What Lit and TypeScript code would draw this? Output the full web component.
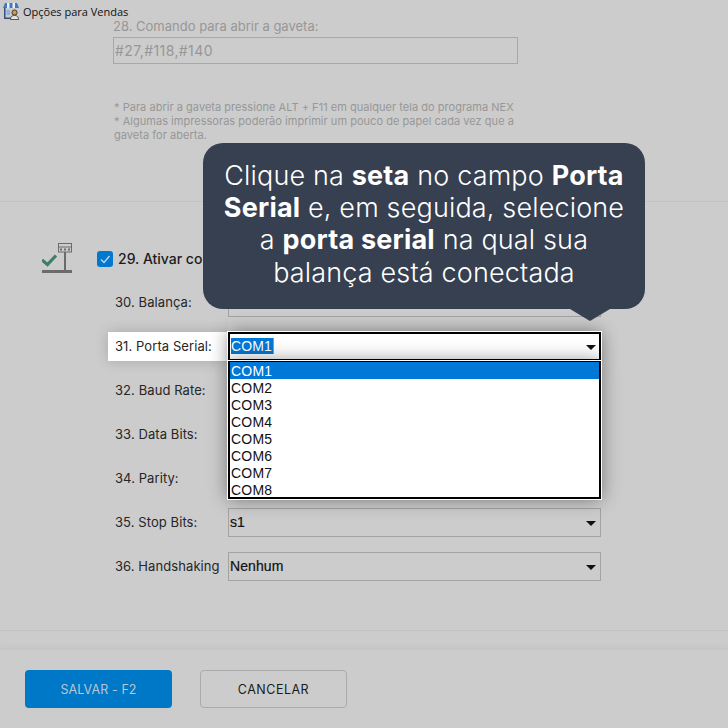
import { LitElement, html, css } from "lit";
import { customElement } from "lit/decorators.js";

const ports = ["COM1", "COM2", "COM3", "COM4", "COM5", "COM6", "COM7", "COM8"];

@customElement("app-root")
export class AppRoot extends LitElement {
  static styles = css`
    :host {
      display: block;
      width: 728px;
      height: 728px;
      overflow: hidden;
      background: #cccccc;
      font-family: Inter, "Liberation Sans", sans-serif;
      color: #1c1c1c;
    }
    .page {
      position: relative;
      width: 728px;
      height: 728px;
      display: flex;
      flex-direction: column;
      overflow: hidden;
    }
    .titlebar {
      height: 21px;
      flex: none;
      box-sizing: border-box;
      padding: 1px 0 0 2px;
      display: flex;
      align-items: center;
      gap: 3px;
      background: #cccccc;
      position: relative;
      z-index: 1;
      font-family: "Open Sans", "Noto Sans", sans-serif;
      font-size: 11px;
      color: #111;
    }
    .gaveta {
      height: 181px;
      flex: none;
      padding-left: 113px;
      box-sizing: border-box;
      border-bottom: 1px solid #c2c2c2;
      color: #979797;
    }
    .gaveta .lbl {
      font-size: 13px;
      line-height: 14px;
      margin-top: -2px;
    }
    .gaveta .field {
      width: 405px;
      height: 27px;
      margin-top: 4px;
      box-sizing: border-box;
      border: 1px solid #a8a8a8;
      padding-left: 1px;
      font-size: 14px;
      line-height: 25px;
      letter-spacing: 0.4px;
    }
    .notes {
      margin: 36px 0 0 1px;
      width: 410px;
      font-size: 11px;
      line-height: 14px;
      letter-spacing: 0.03px;
    }
    .config {
      height: 429px;
      flex: none;
      box-sizing: border-box;
      border-bottom: 1px solid #c2c2c2;
      padding: 41px 0 0 42px;
    }
    .head {
      display: flex;
      align-items: flex-start;
      height: 45px;
    }
    .head svg {
      flex: none;
    }
    .check {
      width: 16px;
      height: 16px;
      margin: 8px 5px 0 23px;
      flex: none;
    }
    .head span {
      font-size: 14px;
      font-weight: 500;
      line-height: 18px;
      margin-top: 7px;
    }
    .row {
      display: flex;
      align-items: center;
      height: 29px;
      margin: 0 0 15px 73px;
      font-size: 13px;
      letter-spacing: 0.08px;
      color: #262626;
    }
    .row .name {
      width: 113px;
      flex: none;
      box-sizing: border-box;
      padding-bottom: 2px;
      white-space: nowrap;
    }
    .select {
      position: relative;
      width: 373px;
      height: 29px;
      flex: none;
      box-sizing: border-box;
      border: 1px solid #a3a3a3;
      padding-left: 1px;
      font-family: "Liberation Sans", Arial, sans-serif;
      font-size: 14px;
      font-weight: 500;
      line-height: 27px;
      letter-spacing: 0.1px;
      color: #111;
      -webkit-text-stroke: 0.2px #111;
    }
    .caret {
      position: absolute;
      right: 4px;
      top: 12px;
      width: 0;
      height: 0;
      border-left: 5px solid transparent;
      border-right: 5px solid transparent;
      border-top: 5px solid #111;
    }
    .row.focus {
      position: relative;
      z-index: 2;
    }
    .row.focus .name {
      align-self: stretch;
      display: flex;
      align-items: center;
      background: #fff;
      margin-left: -7px;
      padding-left: 7px;
      width: 120px;
      box-shadow: 0 0 14px rgba(0, 0, 0, 0.18);
      clip-path: inset(-20px 0 -20px -20px);
    }
    .row.focus .select {
      background: #fff;
      border: 2px solid #000;
      outline: 1px solid #fff;
      line-height: 25px;
      box-shadow: 0 0 18px rgba(0, 0, 0, 0.45);
      z-index: 3;
    }
    .row.focus .caret {
      top: 11px;
      right: 3px;
    }
    .picked {
      background: #0078d7;
      color: #fff;
      -webkit-text-stroke: 0;
      display: inline-block;
      line-height: 16px;
      padding-right: 1px;
      border-right: 1px solid #e8873a;
    }
    .list {
      position: absolute;
      left: -2px;
      top: 27px;
      width: 373px;
      height: 138px;
      box-sizing: border-box;
      background: #fff;
      border: 2px solid #000;
      border-top-width: 1px;
      outline: 1px solid #fff;
      box-shadow: 0 0 18px rgba(0, 0, 0, 0.45);
    }
    .list div {
      height: 17px;
      line-height: 19px;
      padding-left: 1px;
      font-weight: 400;
      -webkit-text-stroke: 0;
      color: #111;
      letter-spacing: 0.2px;
    }
    .list div.on {
      background: #0078d7;
      color: #fff;
    }
    .footer {
      flex: 1;
      margin-top: 19px;
      display: flex;
      gap: 28px;
      padding: 20px 0 0 25px;
      box-shadow: 0 -4px 6px rgba(0, 0, 0, 0.035);
    }
    .btn {
      width: 147px;
      height: 38px;
      box-sizing: border-box;
      border-radius: 4px;
      display: flex;
      align-items: center;
      justify-content: center;
      font-size: 12.5px;
      font-weight: 400;
    }
    .btn.save {
      background: #0078c8;
      color: #b9c6d2;
      letter-spacing: 0.1px;
    }
    .btn.cancel {
      border: 1px solid #aaaaaa;
      color: #1a1a1a;
      letter-spacing: 0.5px;
    }
    .tip {
      position: absolute;
      left: 203px;
      top: 143px;
      width: 442px;
      height: 166px;
      box-sizing: border-box;
      padding: 16.5px 16px 0;
      background: #364050;
      border-radius: 20px;
      color: #fff;
      text-align: center;
      font-size: 27px;
      line-height: 32.4px;
      font-weight: 300;
      letter-spacing: 0.15px;
      z-index: 5;
    }
    .tip b {
      font-weight: 700;
      letter-spacing: 0.2px;
    }
    .tip::after {
      content: "";
      position: absolute;
      left: 367px;
      top: 166px;
      width: 0;
      height: 0;
      border-left: 20px solid transparent;
      border-right: 20px solid transparent;
      border-top: 12px solid #364050;
    }
  `;

  storeIcon() {
    return html`<svg width="18" height="18" viewBox="0 0 18 18">
      <path d="M3 1h12l2 5H1z" fill="#3f78c4" />
      <path d="M5 1h2.500v5H5zM10.500 1H13v5h-2.500z" fill="#e8eef6" />
      <path d="M2 6h1.500v11H2zM3 15.500h6V17H3z" fill="#33507f" />
      <path d="M4.500 8h3.500v5H4.500z" fill="#8fb2dd" />
      <circle cx="12.500" cy="10.500" r="2.600" fill="#c59a5a" stroke="#222" stroke-width="0.8" />
      <path d="M8.500 17.500c0-3 1.500-4 4-4s4 1 4 4z" fill="#e6e6e6" stroke="#333" stroke-width="0.8" />
    </svg>`;
  }

  scaleIcon() {
    return html`<svg width="32" height="32" viewBox="0 0 32 32">
      <path d="M0 27h30v3H0z" fill="#6b6b6b" />
      <path d="M22 9h2v18h-2z" fill="#6b6b6b" />
      <rect x="16.500" y="0.500" width="13" height="8.500" fill="none" stroke="#6b6b6b" stroke-width="1" />
      <path d="M16.500 4h13" stroke="#6b6b6b" stroke-width="1" />
      <path d="M18 5.500h2v2h-2zM22 5.500h2v2h-2zM26 5.500h2v2h-2z" fill="#6b6b6b" />
      <path d="M0 17l5.500 4.500 8.500-9" fill="none" stroke="#3e7f67" stroke-width="3.200" />
    </svg>`;
  }

  checkbox() {
    return html`<svg class="check" viewBox="0 0 16 16">
      <rect width="16" height="16" rx="3" fill="#0078d0" />
      <path d="M4 8.500l3 3 5.500-6.500" fill="none" stroke="#c9d8e6" stroke-width="1.300" />
    </svg>`;
  }

  row(name: string, value: string) {
    return html`<div class="row">
      <div class="name">${name}</div>
      <div class="select">${value}<i class="caret"></i></div>
    </div>`;
  }

  render() {
    return html`
      <div class="page">
        <div class="titlebar">${this.storeIcon()}<span>Opções para Vendas</span></div>

        <section class="gaveta">
          <div class="lbl">28. Comando para abrir a gaveta:</div>
          <div class="field">#27,#118,#140</div>
          <p class="notes">
            * Para abrir a gaveta pressione ALT + F11 em qualquer tela do programa NEX<br />
            * Algumas impressoras poderão imprimir um pouco de papel cada vez que a gaveta for aberta.
          </p>
        </section>

        <section class="config">
          <div class="head">
            ${this.scaleIcon()}${this.checkbox()}<span>29. Ativar comunicação com balança</span>
          </div>
          ${this.row("30. Balança:", "")}
          <div class="row focus">
            <div class="name">31. Porta Serial:</div>
            <div class="select">
              <span class="picked">COM1</span><i class="caret"></i>
              <div class="list">
                ${ports.map((p, i) => html`<div class=${i === 0 ? "on" : ""}>${p}</div>`)}
              </div>
            </div>
          </div>
          ${this.row("32. Baud Rate:", "")}
          ${this.row("33. Data Bits:", "")}
          ${this.row("34. Parity:", "")}
          ${this.row("35. Stop Bits:", "s1")}
          ${this.row("36. Handshaking", "Nenhum")}
        </section>

        <footer class="footer">
          <div class="btn save">SALVAR - F2</div>
          <div class="btn cancel">CANCELAR</div>
        </footer>

        <div class="tip">
          Clique na <b>seta</b> no campo <b>Porta Serial</b> e, em seguida, selecione a <b>porta serial</b> na qual sua balança está conectada
        </div>
      </div>
    `;
  }
}
